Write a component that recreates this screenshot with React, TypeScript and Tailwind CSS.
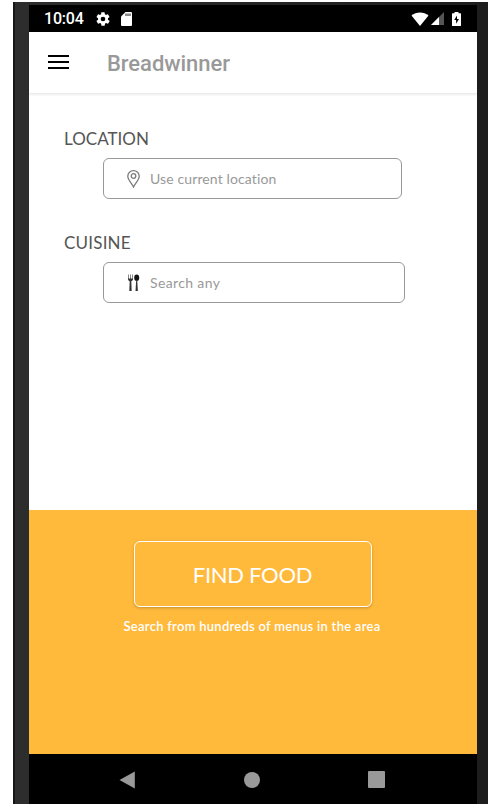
import type { ReactNode } from "react";

function StatusBar() {
  return (
    <header className="flex h-[27px] items-center bg-black pl-[15px] text-white">
      <span className="w-[51px] pt-px font-['Roboto',sans-serif] text-[16px] leading-none font-medium tracking-[-0.2px]">10:04</span>
      <svg className="size-4" viewBox="0 0 24 24" fill="currentColor">
        <path d="M19.4 13c.1-.3.1-.6.1-1s0-.7-.1-1l2.1-1.7c.2-.1.3-.4.1-.6l-2-3.5c-.1-.2-.4-.3-.6-.2l-2.5 1a7 7 0 0 0-1.7-1l-.4-2.6a.5.5 0 0 0-.5-.4h-4a.5.5 0 0 0-.5.4L9.2 5c-.6.3-1.2.6-1.7 1L5 5c-.2-.1-.5 0-.6.2l-2 3.5c-.1.2-.1.5.1.6L4.6 11a8 8 0 0 0 0 2l-2.1 1.7c-.2.1-.3.4-.1.6l2 3.5c.1.2.4.3.6.2l2.5-1c.5.4 1.1.7 1.7 1l.4 2.6c0 .2.2.4.5.4h4c.2 0 .4-.2.5-.4l.4-2.6c.6-.3 1.2-.6 1.7-1l2.5 1c.2.1.5 0 .6-.2l2-3.5c.1-.2.1-.5-.1-.6zM12 15.5a3.5 3.5 0 1 1 0-7 3.5 3.5 0 0 1 0 7z" />
      </svg>
      <svg className="ml-[10px] h-[14px] w-[11px]" viewBox="0 0 11 14">
        <path d="M4.5 0H10Q11 0 11 1v12q0 1-1 1H1q-1 0-1-1V4.5z" fill="currentColor" />
        <path d="M5 1.5v2.5M7 1.5v2.5M9 1.5v2.5" stroke="#000" strokeWidth=".9" />
      </svg>
      <svg className="ml-auto h-[14px] w-[18px]" viewBox="0 0 18 14">
        <path d="M.5 3.6C5-.7 13-.7 17.5 3.6L9 14z" fill="currentColor" />
      </svg>
      <svg className="ml-[2px] h-[13px] w-[13px]" viewBox="0 0 13 13">
        <path d="M13 0v13H0z" fill="#555" />
        <path d="M8 5v8H0z" fill="currentColor" />
      </svg>
      <svg className="mr-4 ml-2 h-[14px] w-[9px]" viewBox="0 0 9 14">
        <path d="M2.5 0h4v1.3h2q.5 0 .5.6v11.5q0 .6-.6.6H.6q-.6 0-.6-.6V1.900q0-.6.5-.6h2z" fill="currentColor" />
        <path d="M5 3.5 2.2 8h1.9v3.8L7 7H5z" fill="#000" />
      </svg>
    </header>
  );
}

function Toolbar() {
  return (
    <div className="flex h-[62px] items-center border-b border-[#ececec] pl-[19px] shadow-[0_1px_2px_rgba(0,0,0,0.08)]">
      <button className="mb-[2px] flex w-[59px] flex-col gap-1" aria-label="Menu">
        <span className="h-[2px] w-[21px] bg-black" />
        <span className="h-[2px] w-[21px] bg-black" />
        <span className="h-[2px] w-[21px] bg-black" />
      </button>
      <h1 className="pt-[3px] font-['Roboto',sans-serif] text-[22px] leading-none font-medium tracking-[-0.05px] text-[#999]">Breadwinner</h1>
    </div>
  );
}

function PinIcon() {
  return (
    <svg className="h-[18px] w-[13px]" viewBox="0 0 13 18" fill="none" stroke="#7b7b7b" strokeWidth="1.3">
      <path d="M6.5 17C5.5 14 .8 10 .8 6.2a5.7 5.5 0 0 1 11.4 0C12.2 10 7.5 14 6.5 17z" />
      <circle cx="6.5" cy="6" r="2.3" />
    </svg>
  );
}

function CutleryIcon() {
  return (
    <svg className="h-[18px] w-[13px]" viewBox="0 0 13 18" fill="none">
      <path d="M1.5 .5v5M3.5 .5v5M5.5 .5v5" stroke="#888" strokeWidth="1" />
      <path d="M1 4.5h5c0 1.8-1 2.5-1.7 2.8L4.7 17H2.3l.4-9.7C2 7 1 6.3 1 4.5z" fill="#333" />
      <ellipse cx="9.7" cy="3.7" rx="2.5" ry="3.3" fill="#151515" />
      <path d="M9.2 6h1l.7 11H8.5z" fill="#333" />
    </svg>
  );
}

function Field({ label, placeholder, icon, box, labelStyle, textStyle }: { label: string; placeholder: string; icon: ReactNode; box: string; labelStyle: string; textStyle: string }) {
  return (
    <section>
      <h2 className={"ml-[35px] h-[29px] text-[17px] leading-5 text-[#555] " + labelStyle}>{label}</h2>
      <div className={"ml-[74px] flex h-[41px] items-center rounded-md border border-[#969899] pl-[23px] " + box}>
        {icon}
        <span className={"ml-[10px] text-[14px] leading-5 text-[#999] " + textStyle}>{placeholder}</span>
      </div>
    </section>
  );
}

function NavigationBar() {
  return (
    <nav className="flex h-[50px] items-center bg-black pt-px text-[#999]">
      <svg className="ml-[90px] h-[18px] w-4" viewBox="0 0 16 18" fill="currentColor"><path d="M15.8.5v17L.5 9z" /></svg>
      <span className="ml-[109px] size-4 rounded-full bg-[#999]" />
      <span className="ml-[108px] size-[17px] rounded-[1px] bg-[#999]" />
    </nav>
  );
}

export default function App() {
  return (
    <div className="h-[810px] w-[490px] bg-white pt-[2px] pl-[13px] font-['Lato',sans-serif]">
      <div className="h-[802px] w-[475px] border-l-2 border-[#161616] bg-gradient-to-r from-[#2d2d2e] to-[#1d1d1d] pt-[3px] pr-[11px] pl-[14px]">
        <div className="h-[799px] w-[448px] bg-white">
          <StatusBar />
          <Toolbar />
          <main className="flex h-[416px] flex-col gap-[34px] pt-[35px]">
            <Field label="LOCATION" placeholder="Use current location" icon={<PinIcon />} box="w-[299px]" labelStyle="tracking-[0.02px]" textStyle="tracking-[0.12px]" />
            <Field label="CUISINE" placeholder="Search any" icon={<CutleryIcon />} box="w-[302px]" labelStyle="tracking-[0.2px]" textStyle="tracking-[0.36px]" />
          </main>
          <section className="flex h-[244px] flex-col items-center bg-[#ffb93b] pt-[31px] pr-[2px] text-white">
            <button className="ml-px h-[66px] w-[238px] rounded-md border border-white text-[22px] tracking-[-0.3px] shadow-[0_1px_3px_rgba(0,0,0,0.22)]">FIND FOOD</button>
            <p className="mt-[9px] text-[13px] leading-5 font-semibold tracking-[0.27px]">Search from hundreds of menus in the area</p>
          </section>
          <NavigationBar />
        </div>
      </div>
    </div>
  );
}
